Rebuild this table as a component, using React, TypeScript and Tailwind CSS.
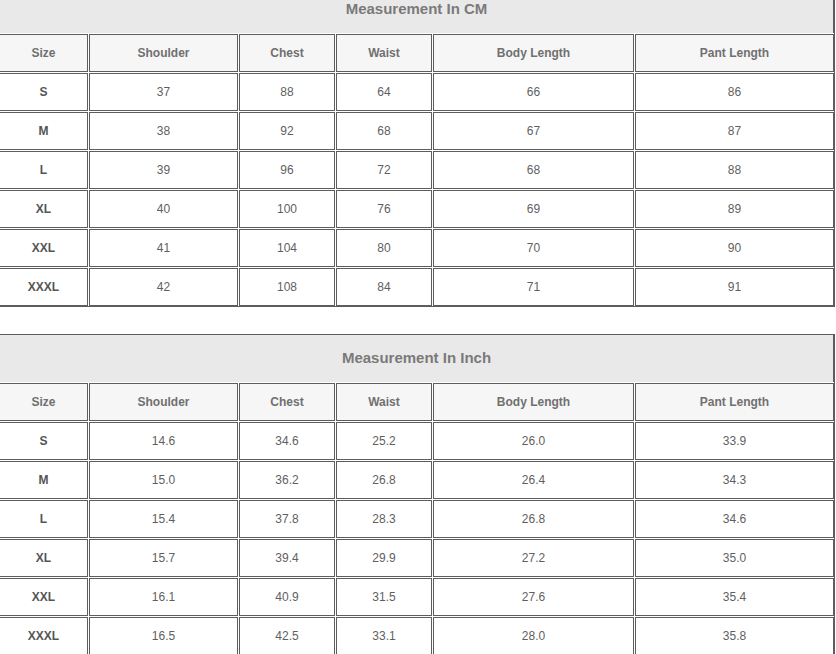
const headers = ['Size', 'Shoulder', 'Chest', 'Waist', 'Body Length', 'Pant Length']

const cmRows = [
  ['S', '37', '88', '64', '66', '86'],
  ['M', '38', '92', '68', '67', '87'],
  ['L', '39', '96', '72', '68', '88'],
  ['XL', '40', '100', '76', '69', '89'],
  ['XXL', '41', '104', '80', '70', '90'],
  ['XXXL', '42', '108', '84', '71', '91'],
]

const inchRows = [
  ['S', '14.6', '34.6', '25.2', '26.0', '33.9'],
  ['M', '15.0', '36.2', '26.8', '26.4', '34.3'],
  ['L', '15.4', '37.8', '28.3', '26.8', '34.6'],
  ['XL', '15.7', '39.4', '29.9', '27.2', '35.0'],
  ['XXL', '16.1', '40.9', '31.5', '27.6', '35.4'],
  ['XXXL', '16.5', '42.5', '33.1', '28.0', '35.8'],
]

interface SizeTableProps {
  title: string
  rows: string[][]
  className?: string
}

function SizeTable({ title, rows, className = '' }: SizeTableProps) {
  return (
    <div className={`ml-[-1px] w-[836px] border-r border-b border-[#5d5d5d] bg-white ${className}`}>
      <div className="grid grid-cols-[89px_149px_96px_96px_201px_199px] gap-px bg-white">
        <div className="col-span-6 h-[48px] flex items-center justify-center border border-b-0 border-[#5d5d5d] bg-[#e9e9e9] text-[15px] font-bold text-[#7a7a7a]">
          {title}
        </div>
        {headers.map((h) => (
          <div
            key={h}
            className="h-[38px] flex items-center justify-center border border-[#5d5d5d] bg-[#f6f6f6] text-[12px] font-bold text-[#707070]"
          >
            {h}
          </div>
        ))}
        {rows.map((row) =>
          row.map((cell, i) => (
            <div
              key={row[0] + i}
              className={`h-[38px] flex items-center justify-center border border-[#5d5d5d] bg-white text-[12px] ${
                i === 0 ? 'font-bold text-[#555]' : 'text-[#5f5f5f]'
              }`}
            >
              {cell}
            </div>
          ))
        )}
      </div>
    </div>
  )
}

export default function App() {
  return (
    <div className="w-[836px] h-[654px] overflow-hidden bg-white font-['Liberation_Sans',Arial,sans-serif]">
      <SizeTable title="Measurement In CM" rows={cmRows} className="mt-[-15px]" />
      <SizeTable title="Measurement In Inch" rows={inchRows} className="mt-[27px]" />
    </div>
  )
}
